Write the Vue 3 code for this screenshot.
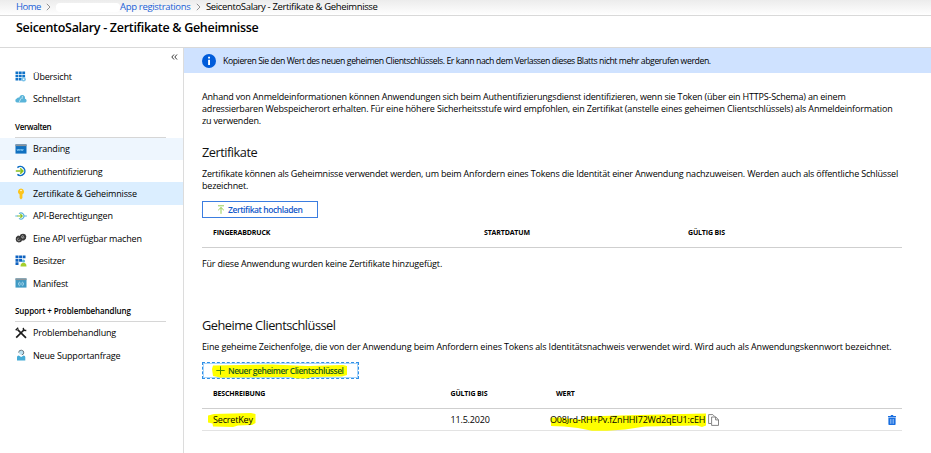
<script setup>
const groups = [
  {
    title: '',
    items: [
      { icon: 'grid', label: 'Übersicht' },
      { icon: 'cloud', label: 'Schnellstart' }
    ]
  },
  {
    title: 'Verwalten',
    tight: true,
    items: [
      { icon: 'brand', label: 'Branding', state: 'hover' },
      { icon: 'auth', label: 'Authentifizierung' },
      { icon: 'key', label: 'Zertifikate & Geheimnisse', state: 'active' },
      { icon: 'perm', label: 'API-Berechtigungen' },
      { icon: 'api', label: 'Eine API verfügbar machen' },
      { icon: 'owner', label: 'Besitzer' },
      { icon: 'manifest', label: 'Manifest' }
    ]
  },
  {
    title: 'Support + Problembehandlung',
    items: [
      { icon: 'tools', label: 'Problembehandlung' },
      { icon: 'support', label: 'Neue Supportanfrage' }
    ]
  }
]
</script>

<template>
  <div class="page">
    <nav class="crumbs">
      <a>Home</a>
      <svg class="chev" viewBox="0 0 5 8"><path d="M.8 .8 4 4 .8 7.2" /></svg>
      <span class="blank"></span>
      <a class="reg">App registrations</a>
      <svg class="chev" viewBox="0 0 5 8"><path d="M.8 .8 4 4 .8 7.2" /></svg>
      <span class="current">SeicentoSalary - Zertifikate &amp; Geheimnisse</span>
    </nav>
    <header class="title"><h1>SeicentoSalary - Zertifikate &amp; Geheimnisse</h1></header>

    <div class="body">
      <aside class="side">
        <div class="collapse">
          <svg viewBox="0 0 7 6"><path d="M3 .5 .8 3 3 5.5M6 .5 3.8 3 6 5.5" /></svg>
        </div>
        <section v-for="(g, i) in groups" :key="i" class="group">
          <h3 v-if="g.title" :class="{ tight: g.tight }">{{ g.title }}</h3>
          <div v-for="it in g.items" :key="it.label" class="item" :class="it.state">
            <svg class="ico" viewBox="0 0 12 12">
              <g v-if="it.icon === 'grid'">
                <path fill="#0f72c8" d="M.5 .5h2.800v2.600H.5zM3.900 .5h2.800v2.600H3.900zM7.300 .5h2.800v2.600H7.300zM.5 3.700h2.800v2.600H.5zM3.900 3.700h2.800v2.600H3.900zM7.300 3.700h2.800v2.600H7.300zM.5 6.900h2.800v2.600H.5zM3.900 6.900h2.800v2.600H3.900z" />
                <circle cx="8.6" cy="8.2" r="2.300" fill="#7cc4ea" /><circle cx="8.6" cy="8.2" r=".8" fill="#fff" />
              </g>
              <g v-else-if="it.icon === 'cloud'" fill="#59b4d9">
                <path d="M2 9.500A2 2 0 0 1 1.800 5.600 2.200 2.200 0 0 1 4.300 4.500 3 3 0 0 1 8.600 2.300 3 3 0 0 1 10 5.700 2 2 0 0 1 10.400 9.500z" />
                <path d="M4.300 9 5.800 5.500M7.500 3 6.900 6" stroke="#fff" stroke-width=".6" />
              </g>
              <g v-else-if="it.icon === 'brand'">
                <path fill="#1070c0" d="M.5 1.400h11v9.200H.5z" /><path fill="#8a9299" d="M.5 1.400h11v1.700H.5z" />
                <path fill="none" stroke="#8fd0f5" stroke-width=".7" d="m2 6 .7 1.800.7-1.800.7 1.800.7-1.800m.7 0 .7 1.800.7-1.800.7 1.800.7-1.800" />
              </g>
              <g v-else-if="it.icon === 'auth'" fill="none">
                <path stroke="#0b6cc4" stroke-width="1.500" d="M2.400 2.600A4.500 4.500 0 1 1 2.400 9.400" />
                <path stroke="#8abf1b" stroke-width="1.500" d="M.8 6h6.600M5.200 3.400 7.900 6 5.200 8.600" />
              </g>
              <g v-else-if="it.icon === 'key'">
                <path fill="#fcc41c" d="M6 .6a3.200 3.200 0 0 1 1.400 6V10L6 11.500 4.600 10V6.600A3.200 3.200 0 0 1 6 .6z" /><circle cx="6" cy="2.400" r=".75" fill="#fff" />
              </g>
              <g v-else-if="it.icon === 'perm'" fill="none">
                <path stroke="#59b4d9" stroke-width="1.100" d="M.3 6H3m6 0h2.900M4 3.700a3 3 0 1 1 0 4.600" />
                <path stroke="#8abf1b" stroke-width="1.200" d="M2.500 6h4.600M5.400 4.200 7.200 6 5.400 7.800" />
              </g>
              <g v-else-if="it.icon === 'api'">
                <path fill="#3b3b3b" d="M1 5.200 3 3.600 4.600 4 5.800 2.200 8 1.700 10.200 2.300 11.300 4.200 10.900 6.700 9 8.400 7 8.600 6 10 3.700 10.600 1.400 9.600 .7 7.400z" />
                <path fill="none" stroke="#cfcfcf" stroke-width=".6" d="M3.700 6.100a1.300 1.300 0 1 0 1.400 1.300M7 5.800 9 3.900M9.100 5.100a1.300 1.300 0 1 1-1-1.500" />
              </g>
              <g v-else-if="it.icon === 'owner'">
                <path fill="#0f62c0" d="M.5 .5h3v2.800h-3zM4.100 .5h3v2.800h-3zM7.700 .5h2.800v2.800H7.700zM.5 3.900h3v2.800h-3zM4.100 3.900h3v2.800h-3zM.5 7.300h3v2.800h-3z" />
                <circle cx="8.500" cy="6" r="1.600" fill="#59b4d9" /><path fill="#a5cf2d" d="M5.500 11.400q0-3.700 3-3.700t3 3.700z" />
              </g>
              <g v-else-if="it.icon === 'manifest'">
                <path fill="#3f9ac4" d="M.5 1.400h11v9.200H.5z" /><path fill="#8b959b" d="M.5 1.400h11v1.700H.5z" />
                <path fill="none" stroke="#d8f0fb" stroke-width=".7" d="M4.700 5q-.8 0-.7 1t-.7.900q.8 0 .7.900t.7 1M7.300 5q.8 0 .7 1t.7.900q-.8 0-.7.900t-.7 1M6 5.500v2.800" />
              </g>
              <g v-else-if="it.icon === 'tools'" fill="none" stroke="#1c1c1c">
                <path stroke-width="1.700" d="m2.600 2.600 8.400 8.200M9.400 2.500 1.200 10.600" /><path stroke-width="1.400" d="M.7 3.300 3.200 .8M8.300 .8l.3 2.500 2.700.2" />
              </g>
              <g v-else>
                <circle cx="6.200" cy="3.500" r="2.200" fill="#b9dff0" /><path fill="#45abd6" d="M2 11.600V8q0-1.600 1.700-1.600l2.500 1.600 2.400-1.600q1.700 0 1.700 1.600v3.600z" />
                <path fill="none" stroke="#5a6b75" stroke-width=".9" d="M3.600 3.600a2.600 2.600 0 1 1 5.200.4q-.2 1.500-2 1.800" />
              </g>
            </svg>
            <span>{{ it.label }}</span>
          </div>
        </section>
      </aside>

      <main class="main">
        <div class="banner">
          <svg class="info" viewBox="0 0 14 14"><circle cx="7" cy="7" r="7" fill="#015cda" /><path fill="#fff" d="M6.100 2.800h1.900v1.800H6.100zM6.100 5.700h1.900v5.400H6.100z" /></svg>
          <span>Kopieren Sie den Wert des neuen geheimen Clientschlüssels. Er kann nach dem Verlassen dieses Blatts nicht mehr abgerufen werden.</span>
        </div>
        <div class="content">
          <p class="intro">
            Anhand von Anmeldeinformationen können Anwendungen sich beim Authentifizierungsdienst identifizieren, wenn sie Token (über ein HTTPS-Schema) an einem<br />
            <span class="l2">adressierbaren Webspeicherort erhalten. Für eine höhere Sicherheitsstufe wird empfohlen, ein Zertifikat (anstelle eines geheimen Clientschlüssels) als Anmeldeinformation</span><br />
            zu verwenden.
          </p>

          <h2>Zertifikate</h2>
          <p class="desc">
            Zertifikate können als Geheimnisse verwendet werden, um beim Anfordern eines Tokens die Identität einer Anwendung nachzuweisen. Werden auch als öffentliche Schlüssel<br />bezeichnet.
          </p>
          <button class="btn upload">
            <svg viewBox="0 0 8 9"><path d="M1 .8h6M4 8.800V2.600M1.200 5.200 4 2.500l2.800 2.700" /></svg>
            <span>Zertifikat hochladen</span>
          </button>
          <div class="row head certs"><span>FINGERABDRUCK</span><span>STARTDATUM</span><span>GÜLTIG BIS</span></div>
          <p class="empty">Für diese Anwendung wurden keine Zertifikate hinzugefügt.</p>

          <h2 class="second">Geheime Clientschlüssel</h2>
          <p class="desc one">Eine geheime Zeichenfolge, die von der Anwendung beim Anfordern eines Tokens als Identitätsnachweis verwendet wird. Wird auch als Anwendungskennwort bezeichnet.</p>
          <button class="btn new">
            <svg class="mark" viewBox="0 0 136 16"><path d="M1 2.500 60 1.500 96 3 131 2 135 3v9l-5 1.500-30 .5-5 1.500H85L78 14l-70 .5-7-1.500L0 6z" /></svg>
            <svg class="plus" viewBox="0 0 9 9"><path d="M4.500 .3v8.400M.3 4.500h8.400" /></svg>
            <span>Neuer geheimer Clientschlüssel</span>
          </button>
          <div class="row head keys"><span>BESCHREIBUNG</span><span>GÜLTIG BIS</span><span>WERT</span></div>
          <div class="row data keys">
            <span class="name">
              <svg class="mark" viewBox="0 0 48 15"><path d="M0 2.500 6 1l37-1 4.500 1v9L44 12l-14 .5-5 1.500-20-.5-.5-3L0 9.500z" /></svg>
              <b>SecretKey</b>
            </span>
            <span>11.5.2020</span>
            <span class="value">
              <svg class="mark" viewBox="0 0 156 18"><path d="M1 4.500h9L20 6l13 .5 2-3L70 2.500l40-1 46-1v12l-4 1.500-5-1.500-52 1-20 3-18 1.200H42L28 15l-14-1.500-13-.5z" /></svg>
              <b>O08Jrd-RH+Pv.fZnHHI72Wd2qEU1:cEH</b>
              <svg class="copy" viewBox="0 0 11 12"><path d="M3 9.500H.6V.6h4.200l2 2M3.600 3h4.200l2.700 2.700v5.700H3.600zM7.600 3v2.900h2.900" /></svg>
            </span>
            <svg class="trash" viewBox="0 0 8 10"><path fill="#1a6fe0" d="M2.800 0h2.400v1H8v1.200H0V1h2.800zM.4 2.800h7.200V9.400l-.6.600H1l-.6-.6z" /><path stroke="#b5d4fa" stroke-width=".6" d="M2.500 4v4.800M4 4v4.800M5.500 4v4.800" /></svg>
          </div>
        </div>
      </main>
    </div>
  </div>
</template>

<style>
body { background: #fff; }
</style>

<style scoped>
.page { width: 931px; height: 453px; overflow: hidden; background: #fff; color: #000; font: 9px/12px "Open Sans", "Noto Sans", sans-serif; letter-spacing: -0.17px; white-space: nowrap; }
h1, h2, h3, p { margin: 0; }
svg { display: block; flex: none; }
.crumbs { box-sizing: border-box; height: 16px; padding: 0 0 1px 16px; display: flex; align-items: center; border-bottom: 1px solid #d9d9d9; background: linear-gradient(#ececec, #fff); font-size: 9.500px; letter-spacing: -0.361px; }
.crumbs a { color: #1a5fd6; width: 25px; letter-spacing: -0.5px; }
.crumbs .reg { width: 71px; letter-spacing: -0.313px; }
.chev { width: 5px; height: 8px; margin: 0 5px; fill: none; stroke: #777; stroke-width: .8; }
.blank { width: 64px; height: 9px; border-radius: 4px; background: #fff; }
.title { box-sizing: border-box; height: 32px; padding: 4px 0 0 16px; border-bottom: 1px solid #d9d9d9; }
h1 { font-size: 12.500px; line-height: 16px; font-weight: 600; letter-spacing: -0.3px; color: #000; }
.body { display: flex; height: 405px; }
.side { box-sizing: border-box; width: 184px; border-right: 1px solid #dcdcdc; }
.collapse { height: 17.400px; padding: 6px 5px 0 0; box-sizing: border-box; display: flex; justify-content: flex-end; }
.collapse svg { width: 7px; height: 6px; fill: none; stroke: #222; stroke-width: .9; }
.item { box-sizing: border-box; height: 22.400px; padding: 1px 0 0 15px; display: flex; align-items: center; }
.item span { margin-left: 6px; }
.ico { width: 12px; height: 12px; margin-top: -1px; }
.hover { background: #eef6fe; }
.active { background: #dbeeff; }
h3 { box-sizing: border-box; height: 27.400px; margin: 0 17px 0 15px; padding-top: 11px; border-bottom: 1px solid #d6d6d6; font-size: 8px; line-height: 12px; font-weight: 600; letter-spacing: -0.1px; }
h3.tight { letter-spacing: -0.33px; }
.main { flex: 1; }
.banner { height: 25px; display: flex; align-items: center; padding-left: 18px; background: #cfe2ff; font-size: 8.700px; letter-spacing: -0.418px; }
.info { width: 14px; height: 14px; margin-right: 7px; }
.content { padding: 18px 29px 0 18px; }
.intro { letter-spacing: -0.185px; }
.l2 { letter-spacing: -0.164px; }
h2 { margin-top: 16px; font-size: 12.800px; line-height: 18px; font-weight: 400; letter-spacing: -0.5px; color: #111; }
.desc { margin-top: 7px; letter-spacing: -0.18px; }
.btn { position: relative; box-sizing: border-box; height: 17px; margin: 9px 0 0; padding: 0; border: 1px solid #3b7de0; background: #fff; display: flex; align-items: center; font: 600 8.500px/14px "Open Sans", sans-serif; letter-spacing: -0.43px; color: #1258c9; }
.upload { width: 116px; padding-left: 14px; }
.upload svg { width: 8px; height: 9px; margin-right: 3px; fill: none; stroke: #8cc63f; stroke-width: .9; }
.row { display: grid; align-items: center; padding-left: 11px; border-bottom: 1px solid #cfcfcf; }
.head { font-size: 7px; font-weight: 700; letter-spacing: -0.15px; height: 29px; }
.certs { grid-template-columns: 271px 204px 1fr; }
.keys { grid-template-columns: 237.500px 105.500px 1fr 14px; }
.empty { margin-top: 10px; }
.second { margin-top: 46px; }
.one { letter-spacing: -0.149px; }
.new { width: 157px; padding-left: 13px; border: 1px dashed #2f8fe6; outline: 1px solid #a8d4fa; outline-offset: -2px; color: #1b5b1b; letter-spacing: -0.476px; }
.mark { position: absolute; fill: #ff0; }
.new .mark { left: 9px; top: 0; width: 136px; height: 16px; }
.plus { position: relative; width: 9px; height: 9px; margin-right: 3px; fill: none; stroke: #4f9100; stroke-width: 1; }
.new span, b { position: relative; font-weight: inherit; }
.data { height: 21px; border-color: #e3e3e3; }
.name, .value { position: relative; display: flex; align-items: center; }
.name .mark { left: -5px; top: -1px; width: 48px; height: 15px; }
.value { margin-left: -6px; }
.value .mark { left: 0; top: -1px; width: 156px; height: 18px; }
.copy { width: 11px; height: 12px; margin-left: 3px; fill: #fff; stroke: #666; stroke-width: .8; }
.trash { width: 8px; height: 10px; }
</style>
